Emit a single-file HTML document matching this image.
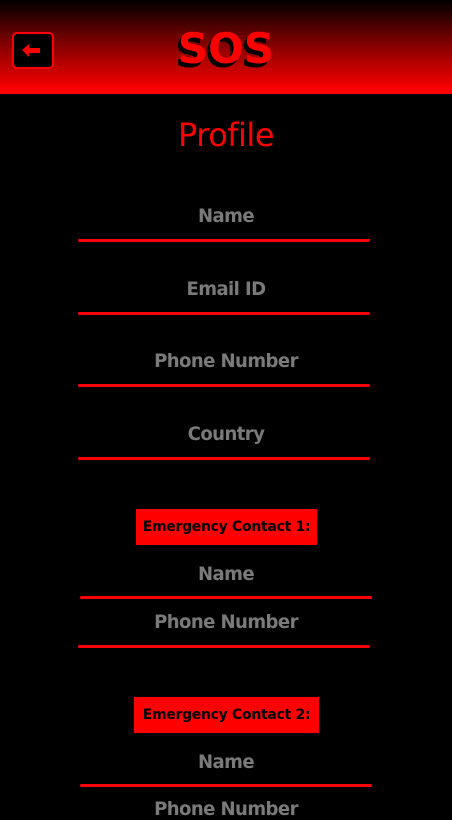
<!DOCTYPE html>
<html><head><style>
*{margin:0;padding:0;box-sizing:border-box}
body{width:452px;height:808px;background:#000;position:relative;overflow:hidden;font-family:"DejaVu Sans","Liberation Sans",sans-serif}
.hdr{position:absolute;left:0;top:0;width:452px;height:91px;background:linear-gradient(#000 0%,#7a0000 45%,#f00 100%)}
.hl{position:absolute;left:0;top:91px;width:452px;height:3px;background:#f00}
.btn{position:absolute;left:12px;top:32px;width:42px;height:37px;background:#000;border:2px solid #f00;border-radius:5px}
.sos{position:absolute;left:0;width:452px;top:24px;text-align:center;font-size:42px;font-weight:bold;color:#f00;text-shadow:-3px 4px 0 #000;letter-spacing:0px}
.c{position:absolute;left:0;width:452px;text-align:center}
.prof{top:116px;font-size:32px;color:#f00;letter-spacing:-0.5px}
.t{font-size:19px;font-weight:bold;color:#7a7a7a;letter-spacing:-0.6px;transform:scaleX(0.95)}
.ln{position:absolute;height:3px;background:#f00;border-radius:2px}
.box{position:absolute;background:#f00;color:#000;font-size:14px;font-weight:bold;text-align:center;line-height:36px;height:36px;letter-spacing:-0.3px}
</style></head><body>
<div class="hdr"></div><div class="hl"></div>
<div class="btn"><svg width="38" height="33" viewBox="0 0 38 33"><path d="M8 16 L15 10 L15 14 L26 14 L26 19 L15 19 L15 23 Z" fill="#f00"/></svg></div>
<div class="sos">SOS</div>
<div class="c prof">Profile</div>
<div class="c t" style="top:205px">Name</div><div class="ln" style="left:78px;width:292px;top:239px"></div>
<div class="c t" style="top:278px">Email ID</div><div class="ln" style="left:78px;width:292px;top:312px"></div>
<div class="c t" style="top:350px">Phone Number</div><div class="ln" style="left:78px;width:292px;top:384px"></div>
<div class="c t" style="top:423px">Country</div><div class="ln" style="left:78px;width:292px;top:457px"></div>
<div class="box" style="left:136px;width:181px;top:509px">Emergency Contact 1:</div>
<div class="c t" style="top:563px">Name</div><div class="ln" style="left:80px;width:292px;top:596px"></div>
<div class="c t" style="top:611px">Phone Number</div><div class="ln" style="left:78px;width:292px;top:645px"></div>
<div class="box" style="left:134px;width:185px;top:697px">Emergency Contact 2:</div>
<div class="c t" style="top:751px">Name</div><div class="ln" style="left:80px;width:292px;top:784px"></div>
<div class="c t" style="top:798px">Phone Number</div>
</body></html>
